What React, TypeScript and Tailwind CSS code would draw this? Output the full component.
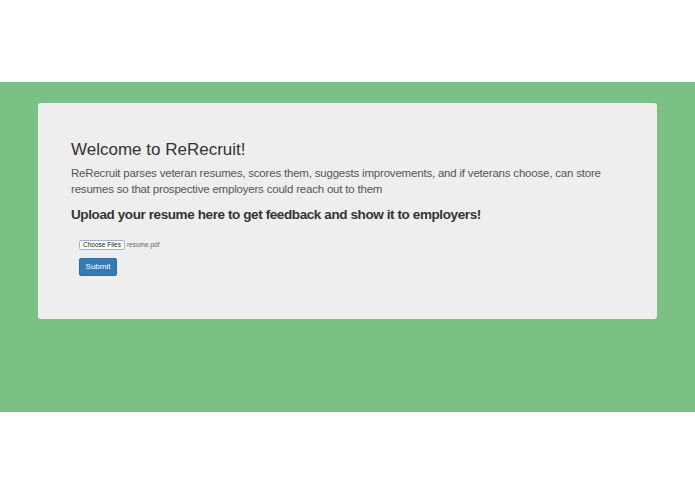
import React from 'react';

const App: React.FC = () => {
  return (
    <div className="w-[695px] h-[494px] bg-white flex flex-col" style={{ fontFamily: '"Liberation Sans", Arial, sans-serif' }}>
      <div className="h-[82px]" />
      <div className="h-[330px] bg-[#7bc084] pt-[21px] px-[38px]">
        <div className="h-[216px] bg-[#eeeeee] rounded-[3px] px-[33px] pt-[35px]">
          <h1 className="text-[17px] leading-[24px] text-[#333333]">Welcome to ReRecruit!</h1>
          <p className="mt-[3px] text-[11.5px] leading-[16px] tracking-[-0.2px] text-[#555555]">
            ReRecruit parses veteran resumes, scores them, suggests improvements, and if veterans choose, can store resumes so that prospective employers could reach out to them
          </p>
          <h2 className="mt-[8px] text-[13.5px] leading-[20px] tracking-[-0.4px] font-bold text-[#333333]">
            Upload your resume here to get feedback and show it to employers!
          </h2>
          <div className="ml-[8px] mt-[15px] flex items-center gap-[2px]">
            <button className="h-[10px] px-[3px] bg-white border border-[#9db4d8] rounded-[2px] text-[6.5px] leading-[8px] text-[#222222]">
              Choose Files
            </button>
            <span className="text-[6.5px] text-[#666666]">resume.pdf</span>
          </div>
          <button className="ml-[8px] mt-[8px] w-[38px] h-[18px] bg-[#337ab7] border border-[#2e6da4] rounded-[2px] text-[8px] text-white">
            Submit
          </button>
        </div>
      </div>
    </div>
  );
};

export default App;
